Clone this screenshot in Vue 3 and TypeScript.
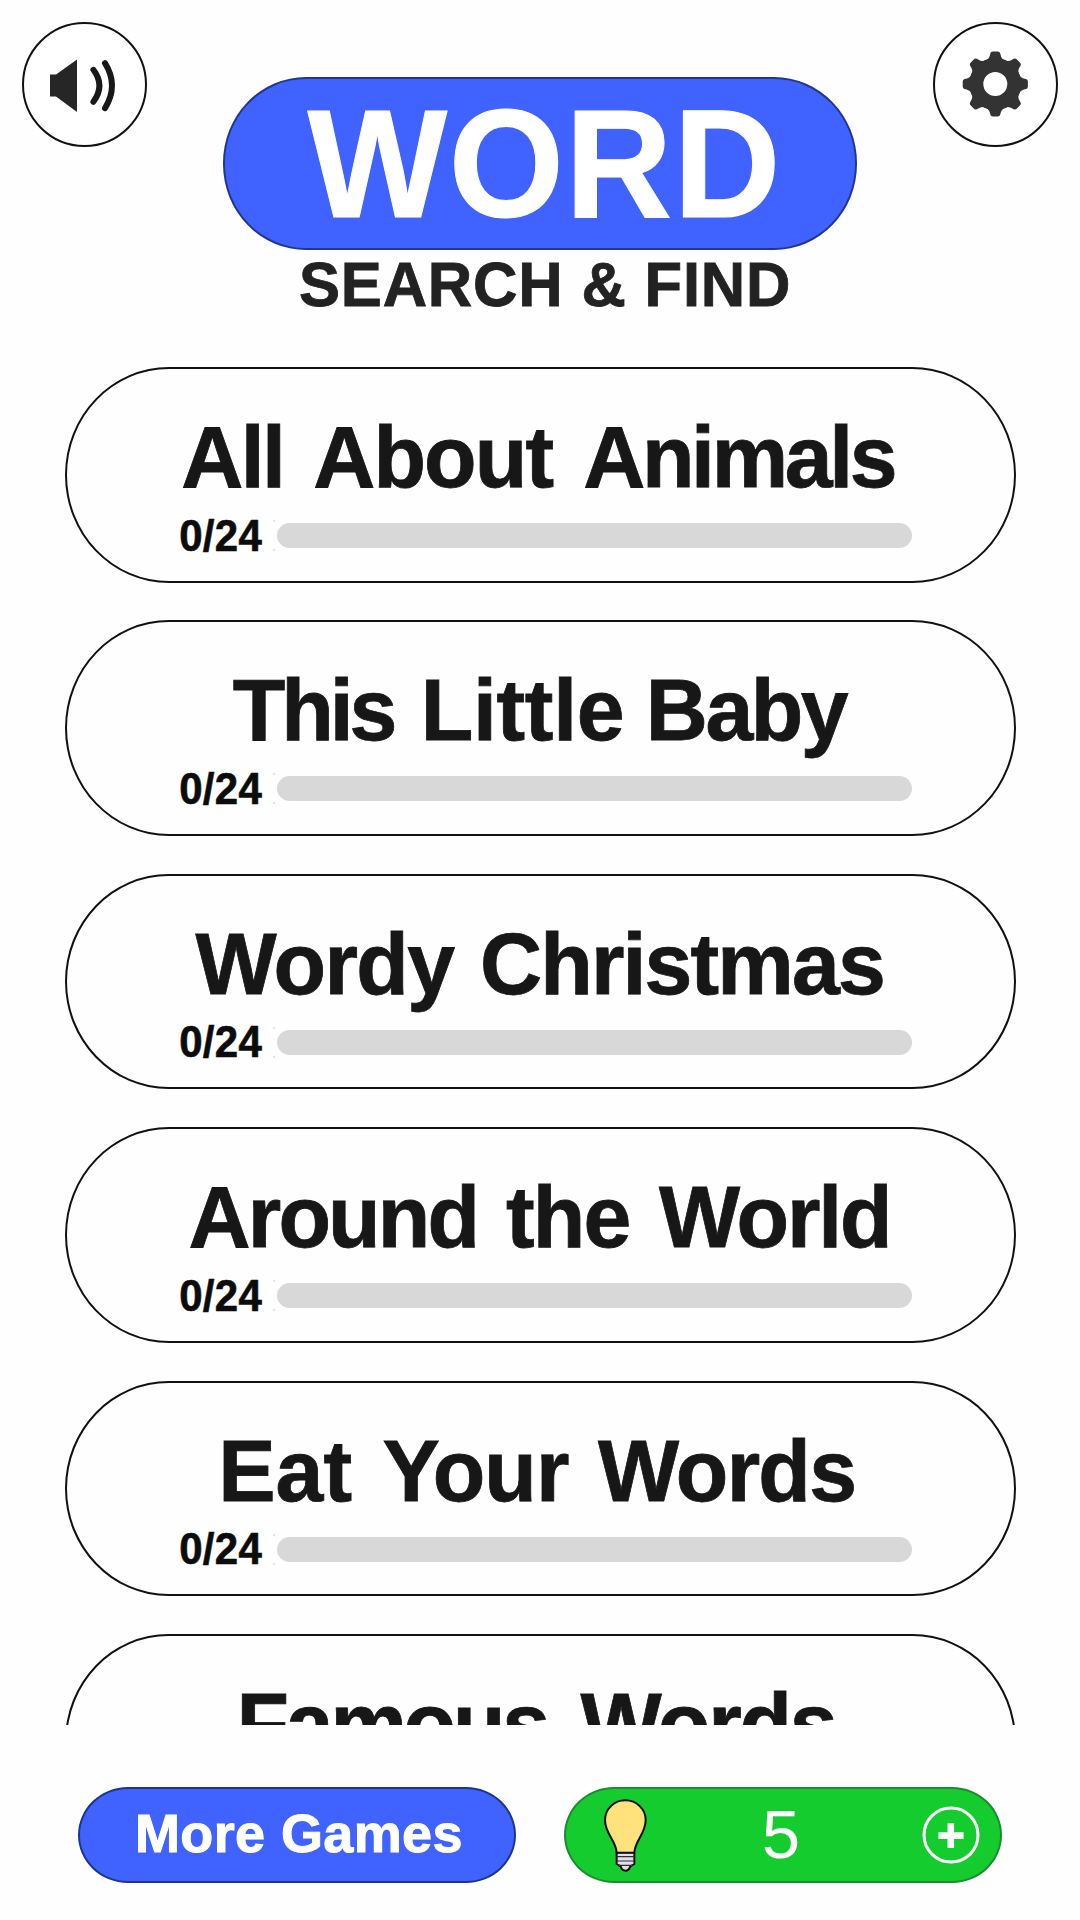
<script setup lang="ts">
interface Word {
  text: string
  start: number
  end: number
}

interface Category {
  words: Word[]
  progress?: { done: number; total: number }
}

const FAMILY = '"Liberation Sans", Arial, sans-serif'
const TITLE_SIZE = 86
const CARD_LEFT = 66.5

const w = (text: string, start: number, end: number): Word => ({ text, start, end })

const categories: Category[] = [
  { words: [w('All', 183.2, 280), w('About', 315.2, 553.5), w('Animals', 585.2, 894.8)], progress: { done: 0, total: 24 } },
  { words: [w('This', 232.8, 394.5), w('Little', 425.8, 621.7), w('Baby', 650.8, 848.8)], progress: { done: 0, total: 24 } },
  { words: [w('Wordy', 195.6, 455.3), w('Christmas', 483, 883)], progress: { done: 0, total: 24 } },
  { words: [w('Around', 190.5, 474.5), w('the', 507, 628.4), w('World', 659, 887)], progress: { done: 0, total: 24 } },
  { words: [w('Eat', 223.2, 351.4), w('Your', 383.6, 569), w('Words', 598, 854.2)], progress: { done: 0, total: 24 } },
  { words: [w('Famous', 241.5, 547.2), w('Words', 580.5, 834.7)] },
]

const ctx = document.createElement('canvas').getContext('2d')!

// Tracks a run of text so that its visible glyphs span exactly `width` pixels.
function fit(text: string, width: number, size: number, weight = 700) {
  ctx.font = `${weight} ${size}px ${FAMILY}`
  const m = ctx.measureText(text)
  const ink = m.actualBoundingBoxLeft + m.actualBoundingBoxRight
  const spacing = text.length > 1 ? (width - ink) / (text.length - 1) : 0
  return {
    width: `${width}px`,
    textIndent: `${m.actualBoundingBoxLeft.toFixed(2)}px`,
    letterSpacing: `${spacing.toFixed(3)}px`,
  }
}

function wordStyle(words: Word[], i: number) {
  const previous = i === 0 ? CARD_LEFT : words[i - 1].end
  return {
    ...fit(words[i].text, words[i].end - words[i].start, TITLE_SIZE),
    marginLeft: `${(words[i].start - previous).toFixed(2)}px`,
  }
}

const toothAngles = [0, 45, 90, 135, 180, 225, 270, 315]
</script>

<template>
  <main class="screen">
    <header class="header">
      <button class="round" aria-label="Sound">
        <svg viewBox="0 0 125 125" width="125" height="125">
          <path d="M28 52.5H34L55 37.5V90L34 74.5H28Z" fill="#262626" />
          <g fill="none" stroke="#181818" stroke-width="6" stroke-linecap="round">
            <path d="M71.4 47.8Q83.4 63.5 71.4 79.8" />
            <path d="M83 41.2Q97 63.5 83 86.2" />
          </g>
        </svg>
      </button>

      <div class="logo">
        <div class="logo-pill"><span class="logo-word fit" :style="fit('WORD', 467, 148)">WORD</span></div>
        <div class="logo-sub fit" :style="fit('SEARCH & FIND', 488, 61.5)">SEARCH &amp; FIND</div>
      </div>

      <button class="round" aria-label="Settings">
        <svg viewBox="0 0 125 125" width="125" height="125">
          <g transform="translate(62.3 62)" fill="#333">
            <path
              v-for="a in toothAngles"
              :key="a"
              :transform="`rotate(${a})`"
              d="M-10.5 -23Q-6 -25 -5.2 -29.5Q-4.8 -32.5 -2.4 -32.6H2.4Q4.8 -32.5 5.2 -29.5Q6 -25 10.5 -23L0 -16Z"
            />
            <circle r="19" fill="none" stroke="#333" stroke-width="14" />
          </g>
        </svg>
      </button>
    </header>

    <section class="list">
      <article v-for="(c, n) in categories" :key="n" class="card">
        <h2 class="title">
          <template v-for="(word, i) in c.words" :key="i">
            <span class="fit" :style="wordStyle(c.words, i)">{{ word.text }}</span>{{ ' ' }}
          </template>
        </h2>
        <div v-if="c.progress" class="progress">
          <span class="count fit" :style="fit('0/24', 82.2, 42)">{{ c.progress.done }}/{{ c.progress.total }}</span>
          <span class="ticks"><i></i><i></i></span>
          <div class="track"></div>
        </div>
      </article>
    </section>

    <footer class="footer">
      <button class="pill more">
        <span class="fit" :style="fit('More Games', 322.5, 54)">More Games</span>
      </button>
      <button class="pill hints">
        <svg class="bulb" viewBox="38 38 135 225" width="45" height="75">
          <g stroke="#0c0c0c" stroke-width="6" stroke-linejoin="round">
            <path
              d="M79 201H132V236L120 243Q116 256 105 256Q94 256 91 243L79 236Z"
              fill="#e2dfe6"
            />
            <path
              d="M79 202C77 165 44 146 44 104A61 59 0 0 1 166 104C166 146 134 165 132 202Z"
              fill="#ffe27b"
            />
            <path d="M80 214H131M80 227H131M84 240H127" stroke="#332b36" stroke-width="3.6" fill="none" />
          </g>
        </svg>
        <span class="hint-count">5</span>
        <svg class="plus" viewBox="0 0 60 60" width="60" height="60">
          <circle cx="30" cy="30" r="27" fill="none" stroke="#fff" stroke-width="3" />
          <path d="M17.4 30.6H42.6M29.8 18.2V43" stroke="#fff" stroke-width="6.6" />
        </svg>
      </button>
    </footer>
  </main>
</template>

<style>
body {
  background: #fefefe;
  overflow: hidden;
}
</style>

<style scoped>
.screen {
  box-sizing: border-box;
  width: 1080px;
  height: 1920px;
  display: flex;
  flex-direction: column;
  overflow: hidden;
  background: #fefefe;
  color: #171717;
  font-family: 'Liberation Sans', Arial, sans-serif;
}

.fit {
  display: block;
  flex: none;
  white-space: nowrap;
}

button {
  display: flex;
  box-sizing: border-box;
  margin: 0;
  padding: 0;
  font: inherit;
  color: inherit;
}

.header {
  flex: none;
  box-sizing: border-box;
  height: 367px;
  padding: 22px 22px 0;
  display: flex;
  justify-content: space-between;
  align-items: flex-start;
}

.round {
  width: 125px;
  height: 125px;
  border: 2px solid #111;
  border-radius: 50%;
  background: #fff;
}

.round svg {
  flex: none;
  margin: -2px;
}

.logo {
  margin-top: 55px;
  width: 634px;
}

.logo-pill {
  box-sizing: border-box;
  height: 172.5px;
  border: 2px solid #20368f;
  border-radius: 83px / 86px;
  background: #4062ff;
  padding: 13px 0 0 82.5px;
}

.logo-word {
  font-size: 148px;
  line-height: 148px;
  font-weight: 700;
  color: #fff;
  -webkit-text-stroke: 1px #fff;
  transform: scaleY(1.043);
  transform-origin: 0 125px;
}

.logo-sub {
  margin: 4.5px 0 0 77px;
  font-size: 61.5px;
  line-height: 61.5px;
  font-weight: 700;
  color: #222;
  -webkit-text-stroke: 0.8px #222;
  transform: scaleY(1.03);
  transform-origin: 0 52px;
}

.list {
  flex: none;
  height: 1358px;
  overflow: hidden;
  display: flex;
  flex-direction: column;
  gap: 37.9px;
  padding: 0 64.5px;
}

.card {
  flex: none;
  box-sizing: border-box;
  height: 215.5px;
  width: 951px;
  border: 2px solid #111;
  border-radius: 104px / 108px;
  padding-top: 45px;
}

.title {
  display: flex;
  margin: 0;
  height: 86px;
  font-size: 86px;
  line-height: 86px;
  font-weight: 700;
  -webkit-text-stroke: 0.8px #171717;
  transform: scaleY(1.015);
  transform-origin: 0 73px;
}

.progress {
  display: flex;
  align-items: center;
  margin: 11.5px 0 0 113.7px;
  height: 48px;
}

.count {
  font-size: 42px;
  line-height: 42px;
  font-weight: 700;
  color: #0c0c0c;
  -webkit-text-stroke: 0.6px #0c0c0c;
  transform: scaleY(1.04);
}

.ticks {
  display: flex;
  flex-direction: column;
  justify-content: space-between;
  height: 31px;
  margin-left: 11.1px;
}

.ticks i {
  width: 2px;
  height: 2px;
  background: #dfe2ff;
}

.track {
  width: 635px;
  height: 25px;
  margin-left: 1.5px;
  border-radius: 12.5px;
  background: #d8d8d8;
}

.footer {
  flex: none;
  display: flex;
  gap: 48px;
  padding: 62px 0 0 78px;
}

.pill {
  width: 438px;
  height: 96px;
  border-radius: 50px / 48px;
  color: #fff;
}

.more {
  border: 2px solid #1d3590;
  background: #4062ff;
  padding: 17px 0 0 58px;
  font-size: 54px;
  line-height: 54px;
  font-weight: 700;
  -webkit-text-stroke: 1px #fff;
}

.more .fit {
  text-align: left;
}

.hints {
  border: 2px solid #1b8c34;
  background: #14cc2e;
  align-items: flex-start;
}

.bulb {
  flex: none;
  margin: 8.5px 0 0 36.5px;
}

.hint-count {
  width: 40px;
  margin: 10.5px 0 0 113.5px;
  font-size: 69px;
  line-height: 70px;
}

.plus {
  flex: none;
  margin: 15.5px 0 0 120px;
}
</style>
